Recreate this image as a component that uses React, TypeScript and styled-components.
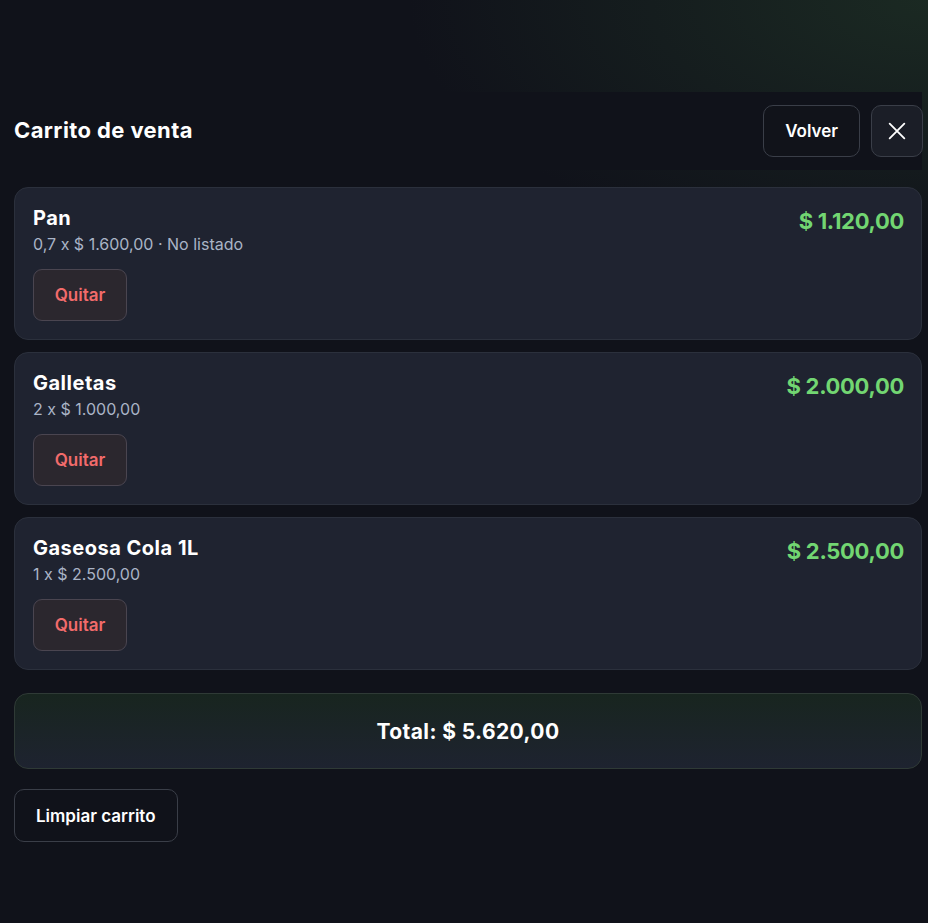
import React from "react";
import styled, { createGlobalStyle } from "styled-components";

const Global = createGlobalStyle`
  html, body { margin: 0; padding: 0; }
  body {
    background: #10121a;
    min-height: 923px;
    font-family: Inter, "Noto Sans", sans-serif;
    color: #f3f4f6;
  }
`;

const Page = styled.div`
  min-height: 923px;
  box-sizing: border-box;
  padding: 92px 6px 40px 14px;
  background:
    radial-gradient(ellipse 520px 260px at 100% 0%, rgba(40, 70, 45, 0.45), rgba(16, 18, 26, 0) 100%),
    #10121a;
`;

const Header = styled.header`
  height: 78px;
  margin-left: -14px;
  padding-left: 14px;
  display: flex;
  align-items: center;
  justify-content: space-between;
  background: #10121a;
`;

const Title = styled.h1`
  margin: 0 0 2px;
  font-family: Inter, "Noto Sans", sans-serif;
  font-weight: 700;
  font-size: 22px;
  letter-spacing: 0.4px;
  color: #ffffff;
`;

const Actions = styled.div`
  display: flex;
  gap: 11px;
`;

const GhostButton = styled.button`
  height: 52px;
  padding: 0 21px;
  border-radius: 10px;
  border: 1px solid #3a3e48;
  background: #11131a;
  color: #ffffff;
  font-family: Inter, sans-serif;
  font-weight: 600;
  font-size: 17px;
  cursor: pointer;
`;

const IconButton = styled.button`
  width: 52px;
  height: 52px;
  margin-right: -1px;
  border-radius: 10px;
  border: 1px solid #3a3e48;
  background: #1b1e27;
  color: #ffffff;
  display: flex;
  align-items: center;
  justify-content: center;
  padding: 0;
`;

const List = styled.div`
  margin-top: 17px;
  display: flex;
  flex-direction: column;
  gap: 12px;
`;

const Card = styled.div`
  height: 153px;
  box-sizing: border-box;
  padding: 18px 17px 18px 18px;
  border-radius: 14px;
  border: 1px solid #2b303c;
  background: #1f2330;
  display: flex;
  justify-content: space-between;
  align-items: flex-start;
`;

const Info = styled.div`
  display: flex;
  flex-direction: column;
`;

const Name = styled.div`
  font-family: Inter, "Noto Sans", sans-serif;
  font-weight: 700;
  font-size: 20px;
  line-height: 24px;
  letter-spacing: 0.5px;
  color: #ffffff;
`;

const Detail = styled.div`
  margin-top: 3px;
  font-size: 16px;
  line-height: 22px;
  color: #aab4c6;
`;

const RemoveButton = styled.button`
  margin-top: 14px;
  width: 94px;
  height: 52px;
  border-radius: 9px;
  border: 1px solid #4a4550;
  background: #2b272e;
  color: #f26b6b;
  font-family: Inter, sans-serif;
  font-weight: 600;
  font-size: 17px;
`;

const Price = styled.div`
  margin-top: 2px;
  font-family: Inter, "Noto Sans", sans-serif;
  font-weight: 700;
  font-size: 22px;
  letter-spacing: -0.3px;
  color: #72d672;
`;

const TotalBox = styled.div`
  margin-top: 23px;
  height: 76px;
  box-sizing: border-box;
  border-radius: 14px;
  border: 1px solid #2f3a36;
  background: linear-gradient(180deg, #18251f 0%, #1e2330 100%);
  display: flex;
  align-items: center;
  justify-content: center;
  font-family: Inter, "Noto Sans", sans-serif;
  font-weight: 700;
  font-size: 21px;
  letter-spacing: 0.4px;
  color: #ffffff;
`;

const ClearButton = styled(GhostButton)`
  margin-top: 20px;
  height: 53px;
  padding: 0 21px;
  background: transparent;
`;

const items = [
  { name: "Pan", detail: "0,7 x $ 1.600,00 · No listado", price: "$ 1.120,00" },
  { name: "Galletas", detail: "2 x $ 1.000,00", price: "$ 2.000,00" },
  { name: "Gaseosa Cola 1L", detail: "1 x $ 2.500,00", price: "$ 2.500,00" },
];

export default function App() {
  return (
    <>
      <Global />
      <Page>
        <Header>
          <Title>Carrito de venta</Title>
          <Actions>
            <GhostButton>Volver</GhostButton>
            <IconButton aria-label="Cerrar">
              <svg width="22" height="22" viewBox="0 0 24 24" fill="none" stroke="currentColor" strokeWidth="2" strokeLinecap="round">
                <path d="M4 4L20 20M20 4L4 20" />
              </svg>
            </IconButton>
          </Actions>
        </Header>
        <List>
          {items.map((it) => (
            <Card key={it.name}>
              <Info>
                <Name>{it.name}</Name>
                <Detail>{it.detail}</Detail>
                <div>
                  <RemoveButton>Quitar</RemoveButton>
                </div>
              </Info>
              <Price>{it.price}</Price>
            </Card>
          ))}
        </List>
        <TotalBox>Total: $ 5.620,00</TotalBox>
        <ClearButton>Limpiar carrito</ClearButton>
      </Page>
    </>
  );
}
